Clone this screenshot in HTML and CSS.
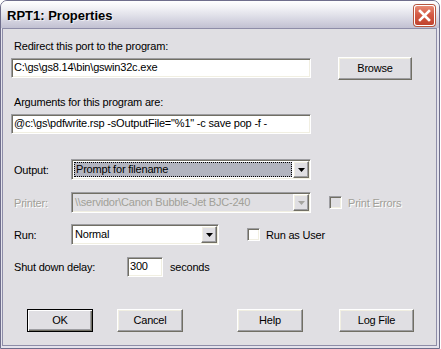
FILE: index.html
```html
<!DOCTYPE html>
<html lang="en">
<head>
    <meta charset="UTF-8">
    <title>RPT1: Properties</title>
<link rel="stylesheet" href="styles.css">
</head>
<body>

    <div class="window">
        <div class="titlebar">
            <span class="title">RPT1: Properties</span>
            <div class="close">
                <svg width="21" height="21" viewBox="0 0 21 21">
                    <path d="M6 6 L15 15 M15 6 L6 15" stroke="#fff" stroke-width="2.6" stroke-linecap="square"/>
                </svg>
            </div>
        </div>

        <div class="client">
            <div class="label first">Redirect this port to the program:</div>
            <div class="row program-row">
                <div class="field wide">C:\gs\gs8.14\bin\gswin32c.exe</div>
                <div class="btn browse">Browse</div>
            </div>

            <div class="label args">Arguments for this program are:</div>
            <div class="field wide">@c:\gs\pdfwrite.rsp -sOutputFile="%1" -c save pop -f -</div>

            <div class="row form-row output-row">
                <span class="row-label">Output:</span>
                <div class="combo combo-wide">
                    <div class="combo-value selected"><span class="focus">Prompt for filename</span></div>
                    <div class="combo-arrow"><svg width="7" height="4" viewBox="0 0 7 4"><path d="M0 0 H7 L3.5 4 Z" fill="#000"/></svg></div>
                </div>
            </div>

            <div class="row form-row printer-row">
                <span class="row-label disabled">Printer:</span>
                <div class="combo combo-wide disabled-combo">
                    <div class="combo-value">\\servidor\Canon Bubble-Jet BJC-240</div>
                    <div class="combo-arrow"><svg width="7" height="4" viewBox="0 0 7 4"><path d="M0 0 H7 L3.5 4 Z" fill="#a5a49f"/></svg></div>
                </div>
                <div class="check-wrap print-errors">
                    <span class="checkbox off"></span>
                    <span class="disabled">Print Errors</span>
                </div>
            </div>

            <div class="row form-row run-row">
                <span class="row-label">Run:</span>
                <div class="combo combo-run">
                    <div class="combo-value">Normal</div>
                    <div class="combo-arrow"><svg width="7" height="4" viewBox="0 0 7 4"><path d="M0 0 H7 L3.5 4 Z" fill="#000"/></svg></div>
                </div>
                <div class="check-wrap run-user">
                    <span class="checkbox"></span>
                    <span>Run as User</span>
                </div>
            </div>

            <div class="row form-row delay-row">
                <span class="delay-label">Shut down delay:</span>
                <div class="field delay">300</div>
                <span class="seconds">seconds</span>
            </div>

            <div class="row buttons">
                <div class="btn default">OK</div>
                <div class="btn cancel">Cancel</div>
                <div class="btn help">Help</div>
                <div class="btn logfile">Log File</div>
            </div>
        </div>
    </div>

</body>
</html>
```

FILE: styles.css
```css
/* Reset */
* {
    padding: 0;
    margin: 0;
    box-sizing: border-box;
}

body {
    background-color: #fff;
    font-family: "Liberation Sans", Arial, sans-serif;
    font-size: 11px;
    letter-spacing: -0.2px;
    color: #000;
}

/* Window frame */
.window {
    width: 440px;
    height: 349px;
    border: 1px solid #6f6e8c;
    border-radius: 7px 7px 0 0;
    background-color: #e4e3ec;
    display: flex;
    flex-direction: column;
    overflow: hidden;
}

.titlebar {
    height: 27px;
    display: flex;
    align-items: center;
    justify-content: space-between;
    padding: 0 4px 0 6px;
    background: linear-gradient(#ffffff 0%, #f2f2f6 25%, #dcdce6 60%, #c2c1d2 100%);
}

.title {
    font-size: 13px;
    font-weight: bold;
    letter-spacing: 0;
    padding-top: 2px;
    text-shadow: 1px 1px 0 rgba(255, 255, 255, 0.6);
}

.close {
    width: 21px;
    height: 21px;
    margin-top: 1px;
    border: 1px solid #fff;
    border-radius: 3px;
    background: linear-gradient(#e88c76, #d45a44 45%, #c0432f);
    box-shadow: 0 0 0 1px #b5563f;
}

.close svg {
    display: block;
    margin: -1px;
}

.client {
    flex: 1;
    margin: 0 2px 2px 1px;
    border: 1px solid #8e8da8;
    background-color: #e0dfe3;
    padding: 11px 0 0 8px;
}

/* Labels */
.label {
    line-height: 13px;
    padding-left: 3px;
}

.args {
    margin-top: 16px;
}

.row {
    display: flex;
    align-items: center;
}

.program-row {
    margin-top: 4px;
    align-items: flex-start;
}

.program-row .field {
    margin-top: 1px;
}

/* Sunken controls */
.field {
    height: 20px;
    line-height: 16px;
    padding: 0 2px;
    background-color: #fff;
    border: 1px solid;
    border-color: #9d9da1 #fff #fff #9d9da1;
    box-shadow: inset 1px 1px 0 #716f64, inset -1px -1px 0 #f1efe2;
    white-space: nowrap;
    overflow: hidden;
}

.wide {
    width: 300px;
}

.label + .field {
    margin-top: 5px;
}

/* Raised buttons */
.btn {
    height: 23px;
    line-height: 21px;
    text-align: center;
    background-color: #e0dfe3;
    border: 1px solid;
    border-color: #fff #716f64 #716f64 #fff;
    box-shadow: inset -1px -1px 0 #9d9da1, inset 1px 1px 0 #f1efe2;
}

.browse {
    width: 74px;
    margin-left: 27px;
}

/* Form rows */
.form-row {
    height: 21px;
}

.output-row {
    margin-top: 25px;
}

.printer-row {
    margin-top: 12px;
}

.run-row {
    margin-top: 11px;
}

.delay-row {
    margin-top: 12px;
    height: 20px;
}

.row-label {
    width: 60px;
    padding-left: 3px;
}

.disabled {
    color: #a19f98;
    text-shadow: 1px 1px 0 #fff;
}

.combo {
    height: 21px;
    display: flex;
    background-color: #fff;
    border: 1px solid;
    border-color: #9d9da1 #fff #fff #9d9da1;
    box-shadow: inset 1px 1px 0 #716f64, inset -1px -1px 0 #f1efe2;
    padding: 1px;
}

.combo-wide {
    width: 240px;
}

.combo-run {
    width: 148px;
}

.combo-value {
    flex: 1;
    line-height: 17px;
    padding-left: 2px;
    white-space: nowrap;
    overflow: hidden;
}

.combo-value.selected {
    margin: 1px;
    padding: 0;
    line-height: 15px;
    background-color: #b2b4bf;
}

.focus {
    display: block;
    height: 15px;
    line-height: 13px;
    padding-left: 1px;
    border: 1px dotted #000;
}

.combo-arrow {
    width: 16px;
    height: 17px;
    display: flex;
    align-items: center;
    justify-content: center;
    background-color: #e0dfe3;
    border: 1px solid;
    border-color: #fff #716f64 #716f64 #fff;
    box-shadow: inset -1px -1px 0 #9d9da1, inset 1px 1px 0 #f1efe2;
}

.combo-arrow svg {
    display: block;
}

.disabled-combo {
    background-color: #e0dfe3;
    color: #a19f98;
}

/* Checkboxes */
.check-wrap {
    display: flex;
    align-items: center;
    gap: 6px;
}

.checkbox {
    width: 13px;
    height: 13px;
    background-color: #fff;
    border: 1px solid;
    border-color: #9d9da1 #fff #fff #9d9da1;
    box-shadow: inset 1px 1px 0 #716f64, inset -1px -1px 0 #f1efe2;
}

.checkbox.off {
    background-color: #e0dfe3;
}

.print-errors {
    margin-left: 18px;
}

.run-user {
    margin-left: 28px;
}

/* Shut down delay */
.delay-label {
    width: 116px;
    padding-left: 3px;
}

.delay {
    width: 36px;
}

.seconds {
    margin-left: 7px;
}

/* Bottom buttons */
.buttons {
    margin-top: 32px;
    padding-left: 16px;
}

.buttons .btn {
    width: 66px;
}

.default {
    border: 1px solid #000;
    box-shadow: inset 1px 1px 0 #fff, inset -1px -1px 0 #716f64, inset -2px -2px 0 #9d9da1;
}

.cancel {
    margin-left: 24px;
}

.help {
    margin-left: 54px;
}

.buttons .logfile {
    width: 75px;
    margin-left: 36px;
}
```
